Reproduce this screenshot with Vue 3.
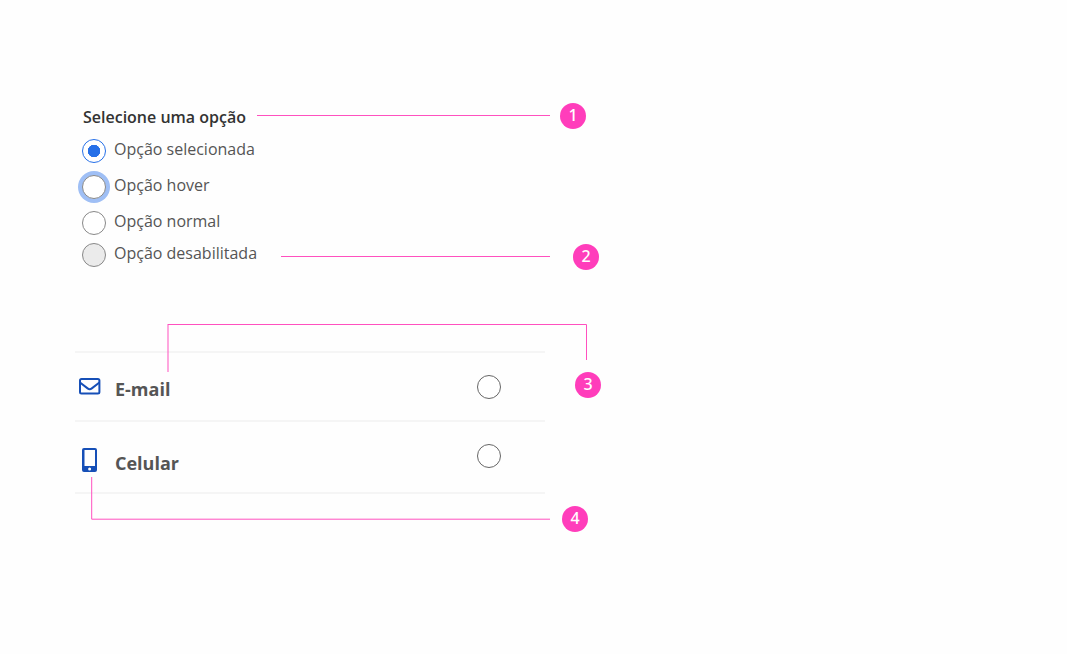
<script setup>
import { ref } from 'vue'

const option = ref('selecionada')
const contact = ref('')

const options = [
  { value: 'selecionada', label: 'Opção selecionada' },
  { value: 'hover', label: 'Opção hover', state: 'hovered' },
  { value: 'normal', label: 'Opção normal' },
  { value: 'desabilitada', label: 'Opção desabilitada', disabled: true },
]
</script>

<template>
  <main class="page">
    <fieldset class="group">
      <legend class="title">Selecione uma opção</legend>
      <div
        v-for="item in options"
        :key="item.value"
        class="option"
        :class="{ compact: item.disabled }"
      >
        <input
          :id="item.value"
          v-model="option"
          class="radio"
          :class="item.state"
          type="radio"
          name="option"
          :value="item.value"
          :disabled="item.disabled"
        />
        <label :for="item.value">{{ item.label }}</label>
      </div>
    </fieldset>

    <div class="list" role="radiogroup" aria-label="Contato">
      <div class="row">
        <svg class="icon" viewBox="0 0 24 26" aria-hidden="true">
          <rect x="2" y="4" width="19.400" height="14.400" rx="1.500" />
          <path d="M2 7.500L9.600 13.400Q11.700 15 13.800 13.400L21.400 7.500" />
        </svg>
        <label for="email">E-mail</label>
        <input id="email" v-model="contact" class="radio dark" type="radio" name="contact" value="email" />
      </div>
      <div class="row tall">
        <svg class="icon" viewBox="0 0 24 26" aria-hidden="true">
          <path
            class="solid"
            fill-rule="evenodd"
            d="M6 1H17Q19 1 19 3V23Q19 25 17 25H6Q4 25 4 23V3Q4 1 6 1ZM6.500 3V19H17V3ZM11.600 20.400A1.500 1.500 0 1 0 11.600 23.400A1.500 1.500 0 1 0 11.600 20.400Z"
          />
        </svg>
        <label for="phone">Celular</label>
        <input id="phone" v-model="contact" class="radio dark" type="radio" name="contact" value="phone" />
      </div>
    </div>

    <svg class="lines" width="620" height="560" aria-hidden="true">
      <path d="M257 115.500H550M281 256.500H550M168 324.500H586.500V360" />
      <path d="M168 324V372" />
      <path d="M91.700 477V519.200H550" />
    </svg>
    <span class="badge one">1</span>
    <span class="badge two">2</span>
    <span class="badge three">3</span>
    <span class="badge four">4</span>
  </main>
</template>

<style>
body {
  margin: 0;
  background: #fefefe;
}
</style>

<style scoped>
.page {
  position: relative;
  box-sizing: border-box;
  min-height: 100vh;
  padding: 107px 24px 24px 75px;
  color: #555;
  font-family: "Open Sans", "Noto Sans", sans-serif;
  font-size: 16px;
}

.group {
  margin: 0;
  padding: 0 0 0 7px;
  border: 0;
}

.title {
  margin-bottom: 12px;
  padding: 0 1px;
  color: #333;
  font-weight: 600;
  line-height: 20px;
}

.option {
  display: flex;
  align-items: flex-start;
  gap: 8px;
  margin-bottom: 12px;
  line-height: 20px;
}

.option.compact {
  margin-top: -4px;
  margin-bottom: 0;
}

.radio {
  flex: none;
  box-sizing: border-box;
  width: 24px;
  height: 24px;
  margin: 0;
  appearance: none;
  border: 1px solid #888;
  border-radius: 50%;
  background: #fff;
}

.radio:checked {
  border-color: #2670e8;
  background: radial-gradient(circle, #2670e8 0 6px, #fff 6.500px);
}

.radio.hovered {
  box-shadow: 0 0 0 4px #9fbff5;
}

.radio:disabled {
  background: #ebebeb;
}

.radio.dark {
  border-color: #666;
}

.list {
  max-width: 470px;
  margin-top: 84px;
  border-top: 2px solid #f5f5f5;
}

.row {
  display: flex;
  align-items: flex-start;
  box-sizing: border-box;
  height: 69px;
  padding: 22px 44px 0 3px;
  border-bottom: 2px solid #f5f5f5;
  font-size: 18px;
  font-weight: 700;
}

.row.tall {
  height: 72px;
}

.row label {
  flex: 1;
  padding-top: 2px;
  line-height: 24px;
}

.row.tall label {
  padding-top: 7px;
}

.icon {
  flex: none;
  width: 24px;
  height: 26px;
  margin-right: 13px;
  fill: none;
  stroke: #164fb7;
  stroke-width: 2;
}

.row.tall .icon {
  margin-top: 3px;
}

.icon .solid {
  fill: #164fb7;
  stroke: none;
}

.lines {
  position: absolute;
  top: 0;
  left: 0;
  fill: none;
  stroke: #ff50bf;
  pointer-events: none;
}

.badge {
  position: absolute;
  width: 26px;
  height: 26px;
  border-radius: 50%;
  background: #ff3dbb;
  color: #fff;
  font-family: "Noto Sans", sans-serif;
  font-size: 16px;
  font-weight: 500;
  line-height: 25px;
  text-align: center;
}

.one {
  top: 103px;
  left: 560px;
}

.two {
  top: 244px;
  left: 573px;
}

.three {
  top: 372px;
  left: 575px;
}

.four {
  top: 506px;
  left: 562px;
}
</style>
